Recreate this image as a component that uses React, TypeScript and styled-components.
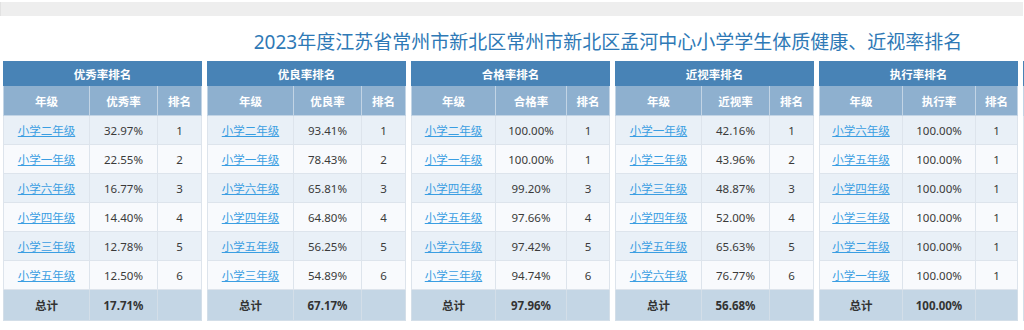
import styled, { createGlobalStyle } from "styled-components";

const GlobalStyle = createGlobalStyle`
  html, body {
    margin: 0;
    padding: 0;
    background: #ffffff;
    overflow: hidden;
  }
  body {
    font-family: "Noto Sans", "Noto Sans CJK SC", sans-serif;
  }
`;

type Row = { grade: string; value: string; rank: number | "" };

type RankTable = {
  title: string;
  metric: string;
  cols: number[];
  rows: Row[];
  total: string;
};

const TABLES: RankTable[] = [
  {
    title: "优秀率排名",
    metric: "优秀率",
    cols: [86, 68, 44],
    rows: [
      { grade: "小学二年级", value: "32.97%", rank: 1 },
      { grade: "小学一年级", value: "22.55%", rank: 2 },
      { grade: "小学六年级", value: "16.77%", rank: 3 },
      { grade: "小学四年级", value: "14.40%", rank: 4 },
      { grade: "小学三年级", value: "12.78%", rank: 5 },
      { grade: "小学五年级", value: "12.50%", rank: 6 },
    ],
    total: "17.71%",
  },
  {
    title: "优良率排名",
    metric: "优良率",
    cols: [86, 68, 44],
    rows: [
      { grade: "小学二年级", value: "93.41%", rank: 1 },
      { grade: "小学一年级", value: "78.43%", rank: 2 },
      { grade: "小学六年级", value: "65.81%", rank: 3 },
      { grade: "小学四年级", value: "64.80%", rank: 4 },
      { grade: "小学五年级", value: "56.25%", rank: 5 },
      { grade: "小学三年级", value: "54.89%", rank: 6 },
    ],
    total: "67.17%",
  },
  {
    title: "合格率排名",
    metric: "合格率",
    cols: [84, 71, 43],
    rows: [
      { grade: "小学二年级", value: "100.00%", rank: 1 },
      { grade: "小学一年级", value: "100.00%", rank: 1 },
      { grade: "小学四年级", value: "99.20%", rank: 3 },
      { grade: "小学五年级", value: "97.66%", rank: 4 },
      { grade: "小学六年级", value: "97.42%", rank: 5 },
      { grade: "小学三年级", value: "94.74%", rank: 6 },
    ],
    total: "97.96%",
  },
  {
    title: "近视率排名",
    metric: "近视率",
    cols: [86, 68, 44],
    rows: [
      { grade: "小学一年级", value: "42.16%", rank: 1 },
      { grade: "小学二年级", value: "43.96%", rank: 2 },
      { grade: "小学三年级", value: "48.87%", rank: 3 },
      { grade: "小学四年级", value: "52.00%", rank: 4 },
      { grade: "小学五年级", value: "65.63%", rank: 5 },
      { grade: "小学六年级", value: "76.77%", rank: 6 },
    ],
    total: "56.68%",
  },
  {
    title: "执行率排名",
    metric: "执行率",
    cols: [83, 73, 42],
    rows: [
      { grade: "小学六年级", value: "100.00%", rank: 1 },
      { grade: "小学五年级", value: "100.00%", rank: 1 },
      { grade: "小学四年级", value: "100.00%", rank: 1 },
      { grade: "小学三年级", value: "100.00%", rank: 1 },
      { grade: "小学二年级", value: "100.00%", rank: 1 },
      { grade: "小学一年级", value: "100.00%", rank: 1 },
    ],
    total: "100.00%",
  },
];

// the next table only peeks in at the right edge of the viewport
const PEEK: RankTable = {
  title: "",
  metric: "",
  cols: [84, 71, 43],
  rows: Array.from({ length: 6 }, () => ({ grade: "", value: "", rank: "" })),
  total: "",
};

const Page = styled.div`
  width: 1216px;
`;

const TopBar = styled.div`
  height: 14px;
  margin-top: 2px;
  background: #eeeeee;
  border-left: 1px solid #e2e2e2;
  width: 1022px;
`;

const Title = styled.h1`
  margin: 0;
  height: 45px;
  line-height: 52px;
  text-align: center;
  font-weight: normal;
  font-size: 19px;
  color: #2e79b6;
  white-space: nowrap;
  font-family: "Noto Sans", "Noto Sans CJK SC", sans-serif;
`;

const Board = styled.div`
  display: flex;
  gap: 5px;
  padding-left: 3px;
`;

const Table = styled.table`
  width: 198.5px;
  flex: 0 0 198.5px;
  table-layout: fixed;
  border-collapse: collapse;
  border: 1px solid #d6dfe8;
  font-size: 11.5px;
  color: #3a3a3a;
`;

const CaptionCell = styled.th`
  height: 23px;
  padding: 0;
  background: #4883b6;
  color: #ffffff;
  font-weight: bold;
  font-size: 11.5px;
  text-align: center;
  border: 1px solid #4883b6;
`;

const HeadCell = styled.th`
  height: 29px;
  padding: 0;
  background: #8eb0cf;
  color: #ffffff;
  font-weight: bold;
  text-align: center;
  border: 1px solid #c2d4e5;
  border-top: none;
`;

const BodyRow = styled.tr<{ $striped: boolean }>`
  background: ${(p) => (p.$striped ? "#e9f0f7" : "#f8fafd")};
`;

const Cell = styled.td<{ $bold?: boolean }>`
  height: 28px;
  padding: 0;
  text-align: center;
  border: 1px solid #dde4ec;
  font-weight: ${(p) => (p.$bold ? "bold" : "normal")};
  white-space: nowrap;
`;

const TotalRow = styled.tr`
  background: #c4d6e5;
  color: #333333;

  td {
    height: 30px;
    border-color: #d3dee8;
  }
`;

const GradeLink = styled.a`
  color: #3a9ee2;
  text-decoration: underline;
  cursor: pointer;
`;

function RankingTable({ table }: { table: RankTable }) {
  const empty = table.title === "";
  return (
    <Table>
      <colgroup>
        {table.cols.map((w, i) => (
          <col key={i} style={{ width: w }} />
        ))}
      </colgroup>
      <thead>
        <tr>
          <CaptionCell colSpan={3}>{table.title}</CaptionCell>
        </tr>
        <tr>
          <HeadCell>{empty ? "" : "年级"}</HeadCell>
          <HeadCell>{table.metric}</HeadCell>
          <HeadCell>{empty ? "" : "排名"}</HeadCell>
        </tr>
      </thead>
      <tbody>
        {table.rows.map((row, i) => (
          <BodyRow key={i} $striped={i % 2 === 0}>
            <Cell>{row.grade && <GradeLink>{row.grade}</GradeLink>}</Cell>
            <Cell>{row.value}</Cell>
            <Cell>{row.rank}</Cell>
          </BodyRow>
        ))}
        <TotalRow>
          <Cell $bold>{empty ? "" : "总计"}</Cell>
          <Cell $bold>{table.total}</Cell>
          <Cell />
        </TotalRow>
      </tbody>
    </Table>
  );
}

export default function App() {
  return (
    <Page>
      <GlobalStyle />
      <TopBar />
      <Title>2023年度江苏省常州市新北区常州市新北区孟河中心小学学生体质健康、近视率排名</Title>
      <Board>
        {TABLES.map((t) => (
          <RankingTable key={t.title} table={t} />
        ))}
        <RankingTable table={PEEK} />
      </Board>
    </Page>
  );
}
